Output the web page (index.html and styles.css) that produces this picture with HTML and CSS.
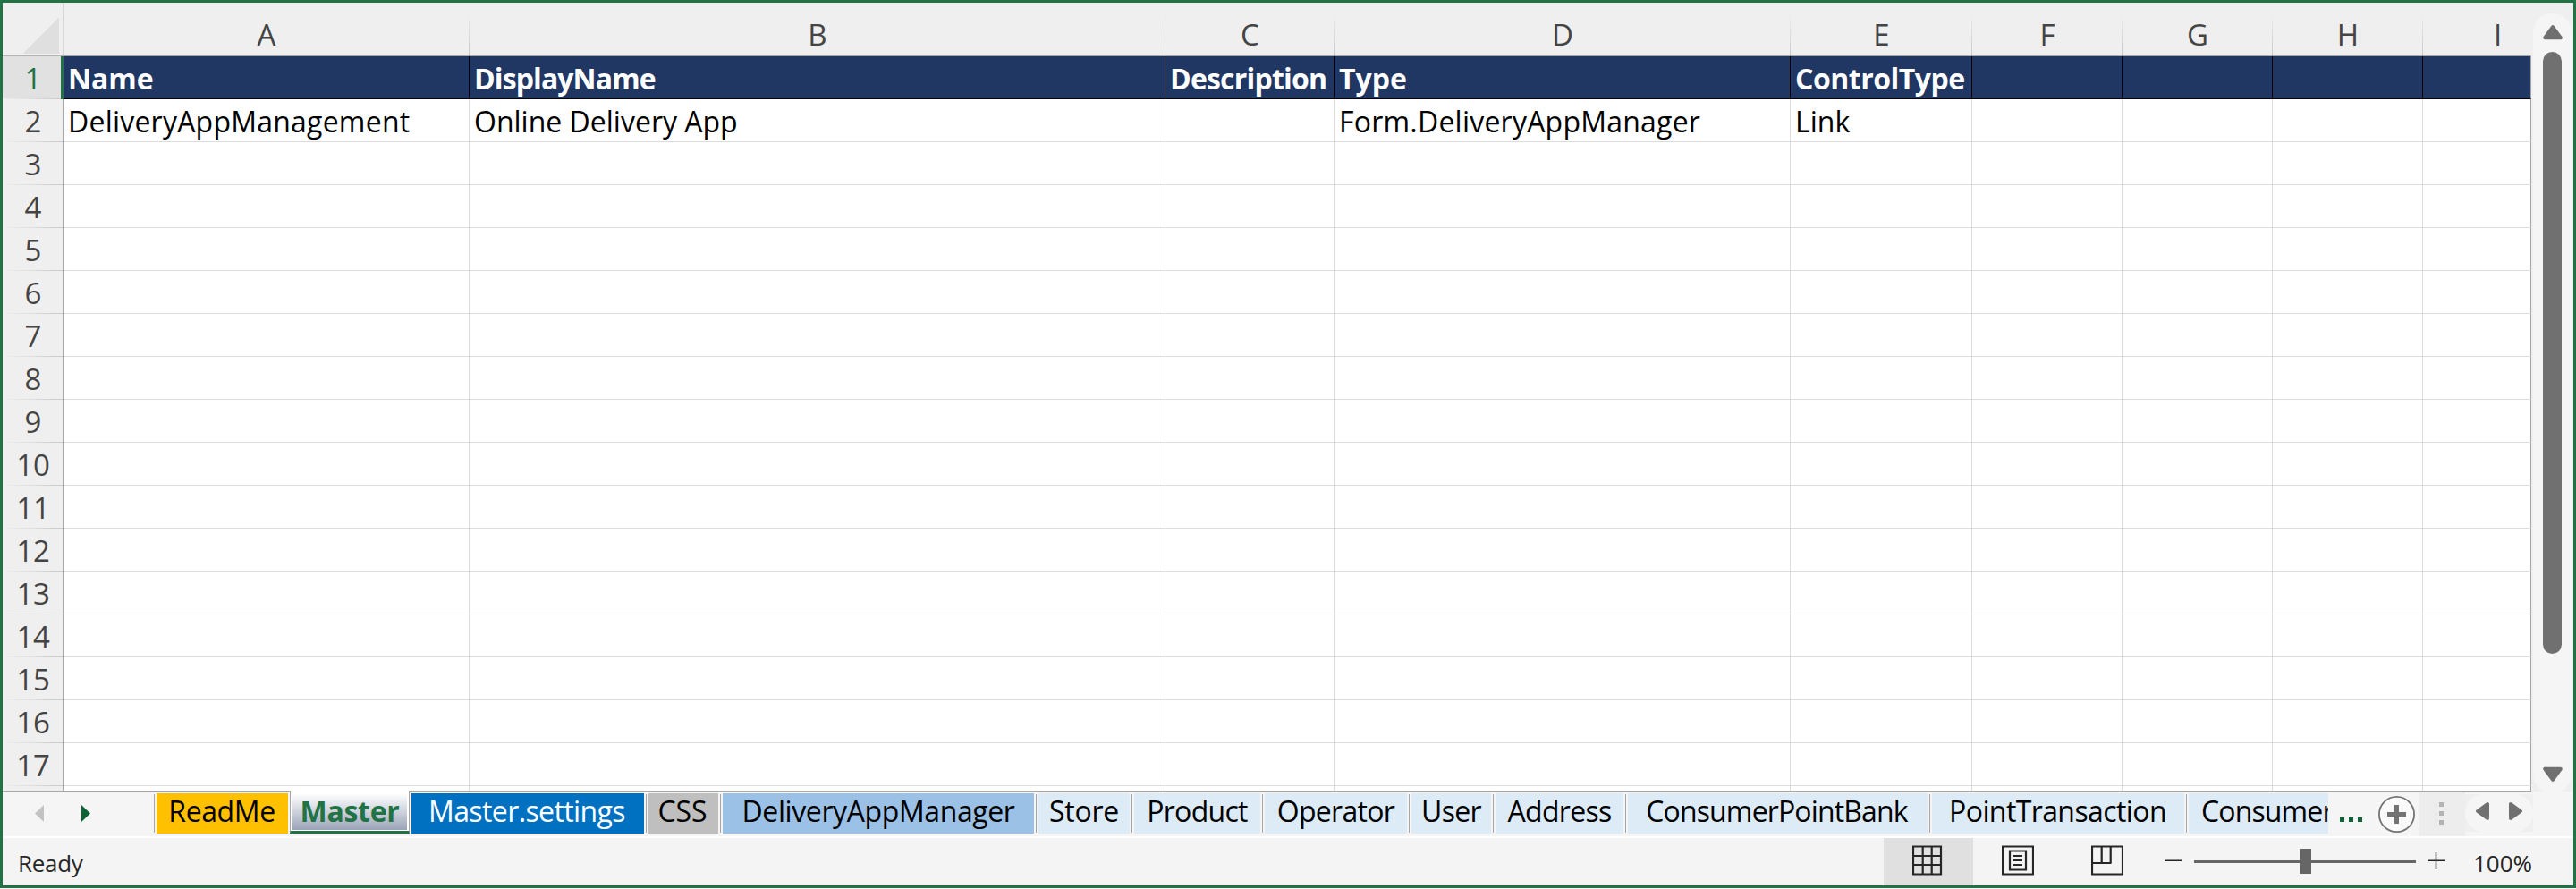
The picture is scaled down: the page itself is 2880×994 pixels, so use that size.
FILE: index.html
```html
<!DOCTYPE html>
<html lang="en">
<head>
<meta charset="utf-8">
<title>Master - Excel</title>
<link rel="stylesheet" href="styles.css">
</head>
<body>
<div class="window">
  <div class="workspace">
    <div class="sheet">
      <div class="grid" id="grid"></div>
    </div>
    <div class="vscroll">
      <div class="vtrack">
        <svg class="varrow" width="22" height="18" viewBox="0 0 22 18"><path d="M11 3.200 L19.800 15.300 H2.200 Z"/></svg>
        <div class="vthumb"></div>
        <svg class="varrow down" width="22" height="18" viewBox="0 0 22 18"><path d="M2.200 2.700 H19.800 L11 14.800 Z"/></svg>
      </div>
    </div>
  </div>
  <div class="tabbar">
    <div class="tabnav">
      <svg width="169" height="50" viewBox="0 0 169 50"><path fill="#c3c3c3" d="M46 15v19L36 24.500z"/><path fill="#0c6334" d="M88 15v19l10-9.500z"/></svg>
    </div>
    <div class="tab-sep"></div>
    <div class="tab readme"><span>ReadMe</span></div>
    <div class="tab master"><span>Master</span></div>
    <div class="tab settings"><span>Master.settings</span></div>
    <div class="tab-sep"></div>
    <div class="tab css"><span>CSS</span></div>
    <div class="tab-sep"></div>
    <div class="tab manager"><span>DeliveryAppManager</span></div>
    <div class="tab-sep"></div>
    <div class="tab store"><span>Store</span></div>
    <div class="tab-sep"></div>
    <div class="tab product"><span>Product</span></div>
    <div class="tab-sep"></div>
    <div class="tab operator"><span>Operator</span></div>
    <div class="tab-sep"></div>
    <div class="tab user"><span>User</span></div>
    <div class="tab-sep"></div>
    <div class="tab address"><span>Address</span></div>
    <div class="tab-sep"></div>
    <div class="tab bank"><span>ConsumerPointBank</span></div>
    <div class="tab-sep"></div>
    <div class="tab transaction"><span>PointTransaction</span></div>
    <div class="tab-sep"></div>
    <div class="tab consumer"><span>Consumer</span></div>
    <div class="tab-more"><i></i><i></i><i></i></div>
    <svg class="tab-add" width="42" height="42" viewBox="0 0 42 42"><circle cx="20.500" cy="20.500" r="19.600" fill="#fafafa" stroke="#737373" stroke-width="1.800"/><path stroke="#737373" stroke-width="5" d="M10 20.500h21M20.500 10v21"/></svg>
    <div class="splitter"><i></i><i></i><i></i></div>
    <div class="hscroll">
      <svg width="76" height="42" viewBox="0 0 76 42"><path d="M14 19L25 11v16z"/><path d="M62 19L51 11v16z"/></svg>
    </div>
  </div>
  <div class="statusbar">
    <span class="ready">Ready</span>
    <div class="view active"><svg width="34" height="34" viewBox="0 0 34 34"><path d="M1 1.500h31v31H1zM11.700 1v31M21.700 1v31M1 12h31M1 22h31"/></svg></div>
    <div class="view"><svg width="36" height="34" viewBox="0 0 36 34"><path d="M1 1.500h34v31H1zM9 6.500h18v21H9zM13 12h10M13 17h10M13 22h10"/></svg></div>
    <div class="view"><svg width="36" height="34" viewBox="0 0 36 34"><path d="M1 1.500h34v31H1zM1 20h21.500M11.700 1v19M21.700 1v19"/></svg></div>
    <div class="zoom">
      <svg width="355" height="53" viewBox="0 0 355 53"><path stroke="#262626" stroke-width="1.500" d="M14 25.300h19M308 25.300h19M317.500 16v19"/><path stroke="#666" stroke-width="3" d="M47 26.500h248"/><path fill="#666" d="M165 12h13v28h-13z"/></svg>
    </div>
    <span class="percent">100%</span>
  </div>
</div>
<script src="sheet.js"></script>
</body>
</html>
```
FILE: sheet.js
```js
const columns = ['A', 'B', 'C', 'D', 'E', 'F', 'G', 'H', 'I'];
const rows = [
  ['Name', 'DisplayName', 'Description', 'Type', 'ControlType', '', '', '', ''],
  ['DeliveryAppManagement', 'Online Delivery App', '', 'Form.DeliveryAppManager', 'Link', '', '', '', '']
];
const grid = document.getElementById('grid');

function add(className, text) {
  const cell = document.createElement('div');
  cell.className = className;
  if (text) {
    const label = document.createElement('span');
    label.textContent = text;
    cell.append(label);
  }
  grid.append(cell);
}

add('corner');
columns.forEach(name => add('colhead col-' + name.toLowerCase(), name));
for (let r = 1; r <= 18; r++) {
  add('rowhead' + (r === 1 ? ' current' : ''), r < 18 ? String(r) : '');
  columns.forEach((name, c) => add('cell in-' + name.toLowerCase() + (r === 1 ? ' title' : ''), (rows[r - 1] || [])[c]));
}
```
FILE: styles.css
```css
* { box-sizing: border-box; }
body { margin: 0; background: #fff; font-family: "Open Sans", "Noto Sans", sans-serif; }
.window { width: 2880px; height: 993px; border: 3px solid #217346; background: #f4f4f4; display: flex; flex-direction: column; }
.workspace { display: flex; height: 882px; }
.sheet { width: 2827px; height: 882px; overflow: hidden; border-bottom: 1px solid #a6a6a6; }
.grid { display: grid; grid-template-columns: 68px 454px 778px 189px 510px 203px 168px 168px 168px 121px; grid-template-rows: 60px repeat(18, 48px); }
.corner { background: #efefef linear-gradient(135deg, transparent 50%, #dfdfdf 50%) 24px 16px / 39px 41px no-repeat; border-right: 1px solid #d6d6d6; border-bottom: 1px solid #b0b0b0; }
.colhead { background: linear-gradient(#efefef 20%, #c9c9c9) right / 1px 100% no-repeat #efefef; border-bottom: 1px solid #a6a6a6; display: flex; justify-content: center; font-size: 33px; line-height: 72px; color: #444; }
.col-i { padding-left: 46px; background: #efefef; }
.rowhead { background: linear-gradient(90deg, #efefef, #c9c9c9) bottom / 100% 1px no-repeat #efefef; border-right: 1px solid #a6a6a6; padding: 1px 0 0 1px; font-size: 33px; line-height: 48px; color: #444; text-align: center; }
.rowhead.current { background-color: #e1e1e1; color: #217346; border-right: 3px solid #217346; padding-left: 3px; }
.cell { background: #fff; border-right: 1px solid #dcdcdc; border-bottom: 1px solid #dcdcdc; padding: 1px 0 0 5px; font-size: 32px; line-height: 48px; white-space: nowrap; color: #000; }
.in-a, .in-d { letter-spacing: 0.22px; }
.cell.title { background: #203764; border-color: #000; color: #fff; font-weight: 700; letter-spacing: 0; }
.cell.in-b.title { letter-spacing: -0.9px; }
.cell.in-c.title { letter-spacing: -0.8px; }
.cell.in-e.title { letter-spacing: -0.5px; }
.cell.in-i { border-right-color: #a6a6a6; }
.vscroll { flex: 1; background: #efefef; padding-top: 12px; }
.vtrack { height: 872px; width: 43px; margin-left: 2px; border-radius: 21px; background: #f5f5f5; display: flex; flex-direction: column; align-items: center; padding: 12px 0 12px; }
.varrow { flex: none; }
.varrow path, .hscroll path { fill: #707070; stroke: #707070; stroke-width: 4; stroke-linejoin: round; }
.vthumb { width: 21px; height: 673px; margin-top: 13px; border-radius: 11px; background: #707070; }
.varrow.down { margin-top: auto; }
.tabbar { display: flex; height: 50px; background: #f5f5f5; align-items: flex-start; }
.tabnav { width: 169px; height: 50px; }
.tab-sep { width: 1px; height: 43px; margin: 3px 2px 0; background: #a6a6a6; }
.tabnav + .tab-sep { margin-left: 0; }
.tab { height: 45px; margin-top: 2px; background: #ddebf7; display: flex; justify-content: center; font-size: 32px; line-height: 40px; letter-spacing: -0.7px; color: #000; white-space: nowrap; flex: none; }
.readme { width: 147px; background: #ffc000; letter-spacing: -0.4px; padding-right: 1px; }
.master { width: 134px; height: 48px; margin: -1px 2px 0; border: 1px solid #a6a6a6; border-top: 0; border-bottom: 3px solid #217346; background: linear-gradient(#fff 8%, #9aa3b8) 2px 0 / 128px 44px no-repeat #fff; color: #217346; font-weight: 700; line-height: 45px; letter-spacing: -0.3px; }
.settings { width: 260px; background: #0070c0; color: #fff; letter-spacing: -0.6px; padding-right: 2px; }
.css { width: 78px; background: #bfbfbf; letter-spacing: 0; padding-right: 2px; }
.manager { width: 348px; background: #9bc2e6; letter-spacing: -0.4px; }
.store { width: 102px; letter-spacing: -0.3px; }
.product { width: 141px; }
.operator { width: 159px; }
.user { width: 89px; }
.address { width: 143px; }
.bank { width: 335px; letter-spacing: -0.86px; padding-right: 2px; }
.transaction { width: 282px; letter-spacing: -0.6px; padding-right: 1px; }
.consumer { width: 156px; justify-content: flex-start; padding-left: 14px; letter-spacing: -0.86px; overflow-x: clip; }
.tab-more { display: flex; gap: 5px; margin: 29px 0 0 13px; }
.tab-more i { width: 5px; height: 5px; background: #0c6334; }
.tab-add { margin: 5px 0 0 18px; flex: none; }
.splitter { width: 51px; height: 50px; margin-left: 4px; background: #ededed; display: flex; flex-direction: column; gap: 5px; align-items: center; padding: 12px 2px 0 0; }
.splitter i { width: 5px; height: 5px; background: #b3b3b3; }
.hscroll { width: 76px; height: 42px; margin-top: 3px; background: radial-gradient(circle at 21px 21px, #f5f5f5 21px, #efefef 21.5px) left / 21px 42px no-repeat, radial-gradient(circle at 0 21px, #f5f5f5 21px, #efefef 21.5px) right / 21px 42px no-repeat; }
.statusbar { height: 55px; border-top: 2px solid #fff; display: flex; background: #f4f4f4; }
.ready { width: 2103px; padding-left: 17px; font-size: 26px; line-height: 56px; letter-spacing: -0.3px; color: #262626; }
.view { width: 100px; padding: 8px 0 0 32px; }
.view.active { background: #e0e0e0; }
.view path { fill: none; stroke: #262626; stroke-width: 2.200; }
.zoom { width: 359px; }
.percent { font-size: 26px; line-height: 56px; color: #262626; }
```
